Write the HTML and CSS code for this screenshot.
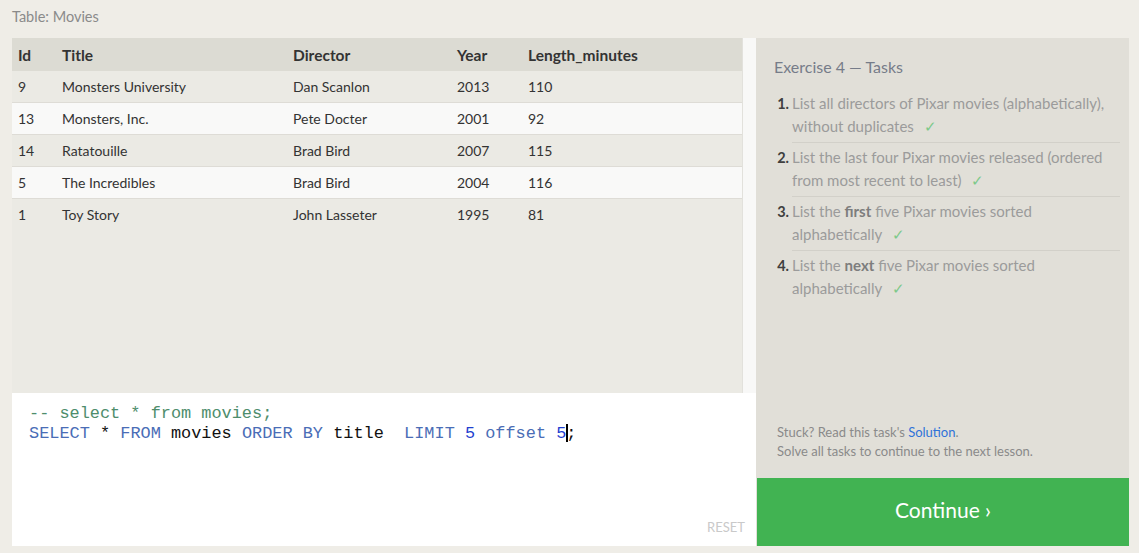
FILE: index.html
```html
<!DOCTYPE html>
<html>
<head>
<meta charset="utf-8">
<link rel="stylesheet" href="styles.css">
</head>
<body>
<div class="page">
  <div class="table-label">Table: Movies</div>
  <div class="workspace">
    <div class="left">
      <div class="table-area">
        <div class="table-scroll">
          <table class="results">
            <thead>
              <tr><th class="c-id">Id</th><th class="c-title">Title</th><th class="c-dir">Director</th><th class="c-year">Year</th><th>Length_minutes</th></tr>
            </thead>
            <tbody>
              <tr><td>9</td><td>Monsters University</td><td>Dan Scanlon</td><td>2013</td><td>110</td></tr>
              <tr><td>13</td><td>Monsters, Inc.</td><td>Pete Docter</td><td>2001</td><td>92</td></tr>
              <tr><td>14</td><td>Ratatouille</td><td>Brad Bird</td><td>2007</td><td>115</td></tr>
              <tr><td>5</td><td>The Incredibles</td><td>Brad Bird</td><td>2004</td><td>116</td></tr>
              <tr><td>1</td><td>Toy Story</td><td>John Lasseter</td><td>1995</td><td>81</td></tr>
            </tbody>
          </table>
        </div>
        <div class="scrollbar"></div>
      </div>
      <div class="editor">
        <div class="code-line"><span class="cm">-- select * from movies;</span></div>
        <div class="code-line"><span class="kw">SELECT</span> * <span class="kw">FROM</span> movies <span class="kw">ORDER</span> <span class="kw">BY</span> title  <span class="kw">LIMIT</span> <span class="num">5</span> <span class="kw">offset</span> <span class="num">5</span><span class="cursor"></span>;</div>
        <div class="reset">RESET</div>
      </div>
    </div>
    <div class="right">
      <div class="tasks">
        <div class="tasks-title">Exercise 4 — Tasks</div>
        <ol class="task-list">
          <li><span class="n">1.</span><span class="t">List all directors of Pixar movies (alphabetically), without duplicates <span class="check">✓</span></span></li>
          <li><span class="n">2.</span><span class="t">List the last four Pixar movies released (ordered from most recent to least) <span class="check">✓</span></span></li>
          <li><span class="n">3.</span><span class="t">List the <b>first</b> five Pixar movies sorted alphabetically <span class="check">✓</span></span></li>
          <li class="last"><span class="n">4.</span><span class="t">List the <b>next</b> five Pixar movies sorted alphabetically <span class="check">✓</span></span></li>
        </ol>
      </div>
      <div class="help">
        <div>Stuck? Read this task's <a class="link">Solution</a>.</div>
        <div>Solve all tasks to continue to the next lesson.</div>
      </div>
      <div class="continue">Continue ›</div>
    </div>
  </div>
</div>
</body>
</html>
```

FILE: styles.css
```css
html, body {
  margin: 0;
  padding: 0;
  background: #efede7;
  font-family: "Lato", "Open Sans", sans-serif;
}
.page {
  width: 1139px;
  height: 553px;
  padding: 0 10px 0 12px;
  box-sizing: border-box;
}
.table-label {
  height: 38px;
  padding-top: 7px;
  box-sizing: border-box;
  font-size: 14.5px;
  line-height: 20px;
  color: #8a8a8a;
}
.workspace {
  display: flex;
  width: 1117px;
  height: 508px;
}
.left {
  width: 744px;
  display: flex;
  flex-direction: column;
}
.table-area {
  height: 355px;
  display: flex;
  background: #ebeae4;
}
.table-scroll {
  width: 730px;
}
.scrollbar {
  width: 13px;
  background: #f8f8f7;
  border-left: 1px solid #e2e1dc;
}
.results {
  width: 100%;
  border-collapse: collapse;
  font-size: 14px;
  color: #333;
}
.results th {
  background: #dcdbd3;
  text-align: left;
  font-weight: 700;
  height: 33px;
  padding: 0 0 0 6px;
  color: #333;
  font-size: 15.5px;
}
.results td {
  height: 31px;
  padding: 0 0 0 6px;
  border-bottom: 1px solid #dedcd6;
}
.results tbody tr:nth-child(odd) td { background: #ebeae4; }
.results tbody tr:nth-child(even) td { background: #f9f9f8; }
.results tbody tr:last-child td { border-bottom: none; }
.c-id { width: 38px; }
.c-title { width: 225px; }
.c-dir { width: 158px; }
.c-year { width: 65px; }

.editor {
  position: relative;
  flex: 1;
  background: #fff;
  padding: 11px 0 0 17px;
  font-family: "Liberation Mono", monospace;
  font-size: 16.9px;
  line-height: 20px;
  color: #111;
}
.code-line { white-space: pre; }
.cm { color: #4e8d6c; }
.kw { color: #4a6db6; }
.num { color: #1f3fcf; }
.cursor {
  display: inline-block;
  width: 2px;
  height: 18px;
  background: #000;
  vertical-align: -4px;
  margin-right: -2px;
}
.reset {
  position: absolute;
  right: 11px;
  bottom: 11px;
  font-family: "Lato", sans-serif;
  font-size: 13px;
  color: #c9c9c9;
  line-height: 16px;
}

.right {
  width: 373px;
  display: flex;
  flex-direction: column;
  background: #e1dfd8;
}
.tasks {
  flex: 1;
  padding: 18px 9px 0 18px;
}
.tasks-title {
  font-size: 16px;
  line-height: 22px;
  color: #767c89;
  margin-bottom: 11px;
}
.task-list {
  list-style: none;
  margin: 0;
  padding: 0;
}
.task-list li {
  display: flex;
  font-size: 15px;
  line-height: 23px;
  padding: 3px 0 4px;
  border-bottom: 1px solid #d2d0c9;
  margin-left: 18px;
}
.task-list li.last { border-bottom: none; }
.task-list .n {
  flex: none;
  width: 17px;
  margin-left: -17px;
  padding-right: 3px;
  box-sizing: border-box;
  text-align: right;
  color: #3f3f3f;
  font-weight: 700;
  font-size: 14.5px;
}
.task-list .t {
  flex: 1;
  color: #9b9b9b;
}
.task-list b { color: #7d7d7d; }
.check {
  color: #7cc98a;
  margin-left: 6px;
}
.help {
  padding: 0 0 17px 21px;
  font-size: 13px;
  line-height: 19px;
  color: #8a8a8a;
}
.link { color: #2f72d8; }
.continue {
  height: 68px;
  box-sizing: border-box;
  padding-bottom: 5px;
  margin-left: 1px;
  background: #41b352;
  color: #fff;
  font-size: 21px;
  display: flex;
  align-items: center;
  justify-content: center;
}
```
